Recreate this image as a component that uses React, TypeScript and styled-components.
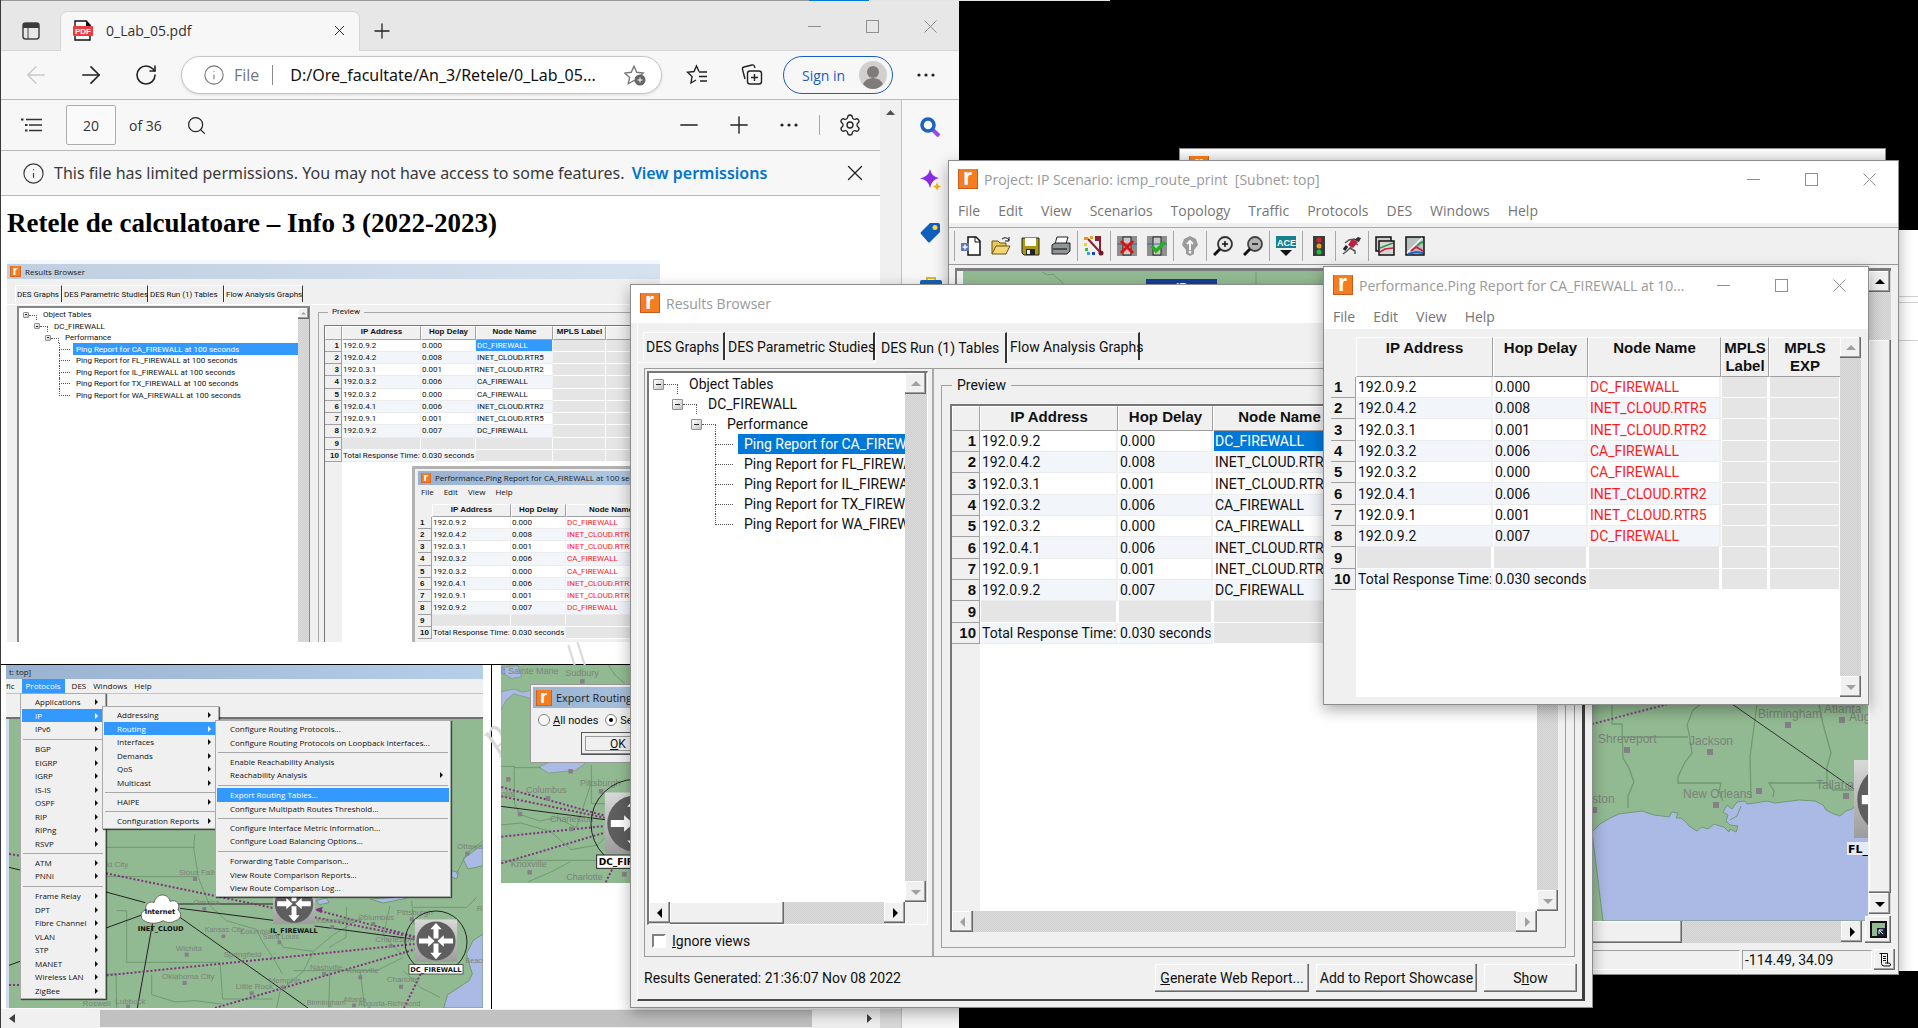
import React from "react";
import styled, { createGlobalStyle, css } from "styled-components";
import { ArrowLeft, ArrowRight, Info, Minus, Plus, RotateCw, Search, Settings, X } from "lucide-react";

const UI = 'Roboto, "Liberation Sans", Arial, sans-serif';
const UI_HEAD = '"Liberation Sans", Arial, sans-serif';
const SEGOE = '"Open Sans", "Segoe UI", sans-serif';
const NOTO = '"Noto Sans", "Segoe UI", sans-serif';
const UI_SIZE = 14;
const UI_BOLD = 15;
const MINI_SIZE = 8;

const GlobalStyle = createGlobalStyle`
  *, *::before, *::after { box-sizing: border-box; }
  body { margin: 0; background: #000; overflow: hidden; }
  button, input { font: inherit; color: inherit; margin: 0; padding: 0; border: 0; background: none; }
  a { text-decoration: none; }
  ul { list-style: none; margin: 0; padding: 0; }
  h1, p { margin: 0; }
  svg { display: block; }
`;

/* ------------------------------------------------------------------ */
/* Desktop and window frames                                           */
/* ------------------------------------------------------------------ */

const Desktop = styled.main`
  position: relative;
  height: 100vh;
  overflow: hidden;
  background: #000;
  font-family: ${UI};
  color: #111;
`;

type Box = { $x: number; $y: number; $w: number; $h: number };

const WindowFrame = styled.section<Box>`
  position: absolute;
  left: ${(p) => p.$x}px;
  top: ${(p) => p.$y}px;
  width: ${(p) => p.$w}px;
  height: ${(p) => p.$h}px;
  display: flex;
  flex-direction: column;
  border: 1px solid #8c8c8c;
  background: #f0f0f0;
  box-shadow: 0 5px 14px rgba(0, 0, 0, 0.32);
`;

const TitleBar = styled.header`
  display: flex;
  align-items: center;
  flex: none;
  height: 38px;
  padding: 0 0 2px 9px;
  background: #fff;
  font-family: ${SEGOE};
  font-size: 14px;
  color: #999;
`;

const TitleText = styled.span`
  flex: 1;
  padding-left: 6px;
  white-space: pre;
  overflow: hidden;
`;

const ControlButton = styled.button`
  display: grid;
  place-items: center;
  width: 58px;
  height: 100%;
  color: #8f8f8f;
`;

const MenuBar = styled.nav`
  display: flex;
  align-items: center;
  flex: none;
  height: 24px;
  background: #fff;
  font-family: ${SEGOE};
  font-size: 14px;
  color: #757575;
`;

const MenuButton = styled.button`
  padding: 0 9px;
  line-height: 20px;
`;

function RiverLogo({ size = 20 }: { size?: number }) {
  return (
    <svg width={size} height={size} viewBox="0 0 20 20" aria-hidden="true">
      <rect width="20" height="20" fill="#c85a1e" />
      <rect x="1" width="18" height="19" fill="#f57c1f" />
      <text x="5" y="16" fontFamily="Liberation Sans" fontWeight="700" fontSize="23" fill="#fff">r</text>
    </svg>
  );
}

function WindowControls() {
  return (
    <>
      <ControlButton aria-label="Minimize"><svg width="13" height="13"><path d="M0 6.5h13" stroke="currentColor" /></svg></ControlButton>
      <ControlButton aria-label="Maximize">
        <svg width="13" height="13"><rect x=".5" y=".5" width="12" height="12" fill="none" stroke="currentColor" /></svg>
      </ControlButton>
      <ControlButton aria-label="Close">
        <svg width="13" height="13"><path d="M.5.5l12 12M12.5.5l-12 12" fill="none" stroke="currentColor" /></svg>
      </ControlButton>
    </>
  );
}

/* ------------------------------------------------------------------ */
/* Classic bevelled parts                                              */
/* ------------------------------------------------------------------ */

const raised = css`
  background: #f0f0f0;
  box-shadow: inset -1px -1px 0 #696969, inset -2px -2px 0 #a0a0a0, inset 1px 1px 0 #fff;
`;

const BevelButton = styled.button`
  ${raised}
  height: 28px;
  font-size: ${UI_SIZE}px;
  white-space: nowrap;
`;

type Dir = "up" | "down" | "left" | "right";
const arrowPaths: Record<Dir, string> = {
  up: "M0 7l5-5 5 5z",
  down: "M0 3l5 5 5-5z",
  left: "M7 0L2 5l5 5z",
  right: "M3 0l5 5-5 5z",
};

const ScrollBox = styled.button<{ $s: number }>`
  ${raised}
  display: grid;
  place-items: center;
  flex: none;
  width: ${(p) => p.$s}px;
  height: ${(p) => p.$s}px;
`;

function ScrollArrow({ dir, size = 21, off = false }: { dir: Dir; size?: number; off?: boolean }) {
  const g = size > 15 ? 10 : 5;
  return (
    <ScrollBox $s={size} aria-label={`Scroll ${dir}`}>
      <svg width={g} height={g} viewBox="0 0 10 10">
        <path d={arrowPaths[dir]} fill={off ? "#a0a0a0" : "#000"} />
      </svg>
    </ScrollBox>
  );
}

const ScrollTrack = styled.div<{ $row?: boolean; $w?: number; $end?: number }>`
  display: flex;
  flex-direction: ${(p) => (p.$row ? "row" : "column")};
  flex: none;
  ${(p) => (p.$row ? `height: ${p.$w ?? 21}px; margin-right: ${p.$end ?? 0}px;` : `width: ${p.$w ?? 21}px; margin-bottom: ${p.$end ?? 0}px;`)}
  background: repeating-conic-gradient(#cfcfcf 0 25%, #dcdcdc 0 50%) 0 0 / 2px 2px;
`;

const Thumb = styled.div<{ $len?: number; $row?: boolean }>`
  ${raised}
  ${(p) => (p.$row ? `width: ${p.$len}px;` : "")}
`;

const Spacer = styled.div`
  flex: 1;
`;

/* ------------------------------------------------------------------ */
/* Report data                                                         */
/* ------------------------------------------------------------------ */

const hops: [string, string, string][] = [
  ["192.0.9.2", "0.000", "DC_FIREWALL"],
  ["192.0.4.2", "0.008", "INET_CLOUD.RTR5"],
  ["192.0.3.1", "0.001", "INET_CLOUD.RTR2"],
  ["192.0.3.2", "0.006", "CA_FIREWALL"],
  ["192.0.3.2", "0.000", "CA_FIREWALL"],
  ["192.0.4.1", "0.006", "INET_CLOUD.RTR2"],
  ["192.0.9.1", "0.001", "INET_CLOUD.RTR5"],
  ["192.0.9.2", "0.007", "DC_FIREWALL"],
  ["", "", ""],
  ["Total Response Time:", "0.030 seconds", ""],
];

const Report = styled.table<{ $mini?: boolean; $head: number; $endNums?: boolean; $red?: boolean }>`
  table-layout: fixed;
  border-collapse: separate;
  border-spacing: 0;
  flex: none;
  font-size: ${(p) => (p.$mini ? MINI_SIZE : UI_SIZE)}px;
  line-height: ${(p) => (p.$mini ? 10 : 18)}px;
  white-space: nowrap;

  th { font-family: ${UI_HEAD}; }
  thead th {
    height: ${(p) => p.$head}px;
    padding: ${(p) => (p.$mini ? 0 : 1)}px 0 0;
    vertical-align: top;
    white-space: pre-line;
    background: #f0f0f0;
    border: solid;
    border-width: 1px;
    border-color: #fff #a0a0a0 #a0a0a0 #fff;
    font-size: ${(p) => (p.$mini ? MINI_SIZE : UI_BOLD)}px;
  }
  tbody tr { height: ${(p) => (p.$mini ? 12 : 21)}px; }
  tbody tr:nth-child(${(p) => (p.$mini ? "4n" : "3n")}) { height: ${(p) => (p.$mini ? 13 : 22)}px; }
  tbody th {
    padding: 0 ${(p) => (p.$mini ? 2 : 3)}px;
    text-align: ${(p) => (p.$endNums ? "right" : "left")};
    background: #f0f0f0;
    border: solid;
    border-width: 0 1px 1px 0;
    border-color: #a0a0a0;
    font-size: ${(p) => (p.$mini ? MINI_SIZE : UI_BOLD)}px;
  }
  td {
    padding: 0 0 0 1px;
    overflow: hidden;
    background: #fff;
    border: solid;
    border-width: 0 ${(p) => (p.$mini ? 1 : 2)}px 1px ${(p) => (p.$mini ? 0 : 1)}px;
    border-color: #fff #f0f0f0 #ececec #fff;
  }
  tbody tr:nth-child(even) td { background: #f2f6fb; }
  tbody td:nth-child(4) { color: ${(p) => (p.$red ? "#ff1a1a" : "inherit")}; }
`;

const Cell = styled.td<{ $off?: boolean; $on?: boolean; $mini?: boolean }>`
  && { ${(p) => p.$off && "background: #e5e5e5 !important; border-color: #fff;"} }
  && { ${(p) => p.$on && `background: ${p.$mini ? "#3399ff" : "#0078d7"} !important; color: #fff !important;`} }
`;

type ReportProps = {
  widths: number[];
  heads: string[];
  head: number;
  corner?: boolean;
  mini?: boolean;
  red?: boolean;
  endNums?: boolean;
  selected?: boolean;
};

const CornerCell = styled.td`
  && { background: #f0f0f0; border: 0; }
`;

function ReportTable({ widths, heads, head, mini, red, endNums, selected, corner }: ReportProps) {
  const total = widths.reduce((a, b) => a + b, 0);
  return (
    <Report $mini={mini} $head={head} $red={red} $endNums={endNums} width={total}>
      <colgroup>{widths.map((w, i) => <col key={i} width={w} />)}</colgroup>
      <thead>
        <tr>
          {corner ? <th aria-label="Row" /> : <CornerCell />}
          {heads.map((h, i) => <th key={i} scope="col">{h}</th>)}
        </tr>
      </thead>
      <tbody>
        {hops.map((row, r) => (
          <tr key={r}>
            <th scope="row">{r + 1}</th>
            {heads.map((_, c) => (
              <Cell key={c} $mini={mini} $off={!row[c]} $on={selected && r === 0 && c === 2}>{row[c]}</Cell>
            ))}
          </tr>
        ))}
      </tbody>
    </Report>
  );
}

/* ------------------------------------------------------------------ */
/* Object tree                                                         */
/* ------------------------------------------------------------------ */

type TreeSize = { row: number; step: number; box: number; elbow: number; leaf: number; dash: number; gap: number; pad: number; font: number };
const bigTree: TreeSize = { row: 20, step: 19, box: 11, elbow: 14, leaf: 62, dash: 18, gap: 5, pad: 6, font: UI_SIZE };
const miniTree: TreeSize = { row: 11, step: 11, box: 6, elbow: 8, leaf: 36, dash: 11, gap: 3, pad: 3, font: MINI_SIZE };

const TreeRow = styled.li<{ $t: TreeSize; $indent: number }>`
  display: flex;
  align-items: center;
  height: ${(p) => p.$t.row}px;
  padding-left: ${(p) => p.$indent}px;
  font-size: ${(p) => p.$t.font}px;
  white-space: nowrap;
  ${(p) => p.$t.row < 15 && "&:nth-child(even) { height: 12px; }"}
`;

const Expander = styled.button<{ $s: number }>`
  display: grid;
  place-items: center;
  flex: none;
  width: ${(p) => p.$s}px;
  height: ${(p) => p.$s}px;
  border: 1px solid #909090;
  border-radius: 1px;
  background: linear-gradient(135deg, #fff, #c4c4c4);
  &::before { content: ""; width: 60%; height: 1px; background: #222; }
`;

const Elbow = styled.span<{ $w: number }>`
  flex: none;
  align-self: flex-end;
  width: ${(p) => p.$w}px;
  height: 50%;
  border: 1px dotted #555;
  border-width: 1px 1px 0 0;
`;

const Tee = styled.span<{ $w: number; $last: boolean }>`
  display: flex;
  flex-direction: column;
  flex: none;
  align-self: stretch;
  width: ${(p) => p.$w}px;
  &::before, &::after { content: ""; flex: 1; border: 0 dotted #555; border-left-width: 1px; }
  &::before { border-bottom-width: 1px; }
  &::after { border-left-width: ${(p) => (p.$last ? 0 : 1)}px; }
`;

const TreeLabel = styled.span<{ $t: TreeSize; $on?: boolean }>`
  display: flex;
  align-items: center;
  flex: ${(p) => (p.$on ? 1 : "none")};
  height: 100%;
  margin-left: ${(p) => p.$t.gap}px;
  padding-left: ${(p) => p.$t.pad}px;
  ${(p) => p.$on && `background: ${p.$t.row < 15 ? "#3399ff" : "#0078d7"}; color: #fff;`}
`;

const TreeList = styled.ul`
  flex: 1;
  min-width: 0;
  overflow: hidden;
  padding: 1px 0 0 4px;
  background: #fff;
`;

const sites = ["CA", "FL", "IL", "TX", "WA"];

function ObjectTree({ t }: { t: TreeSize }) {
  return (
    <TreeList>
      {["Object Tables", "DC_FIREWALL", "Performance"].map((label, depth) => (
        <TreeRow key={label} $t={t} $indent={depth * t.step}>
          <Expander $s={t.box} aria-label={`Collapse ${label}`} />
          <Elbow $w={t.elbow} />
          <TreeLabel $t={t}>{label}</TreeLabel>
        </TreeRow>
      ))}
      {sites.map((s, i) => (
        <TreeRow key={s} $t={t} $indent={t.leaf}>
          <Tee $w={t.dash} $last={i === sites.length - 1} />
          <TreeLabel $t={t} $on={i === 0}>{`Ping Report for ${s}_FIREWALL at 100 seconds`}</TreeLabel>
        </TreeRow>
      ))}
    </TreeList>
  );
}

/* ------------------------------------------------------------------ */
/* Map drawing                                                         */
/* ------------------------------------------------------------------ */

const LAND = "#92ba92";
const SEA = "#abb9e5";
const BORDER = "#6f9a72";

function City({ x, y, label, sx, sy, size }: { x: number; y: number; label?: string; sx?: number; sy?: number; size: number }) {
  const s = size * 0.5;
  return (
    <>
      {sx !== undefined && sy !== undefined && <rect x={sx - s / 2} y={sy - s / 2} width={s} height={s} fill="#857f88" />}
      {label && <text x={x} y={y} fontFamily="Liberation Sans" fontSize={size} fill="#7a827a">{label}</text>}
    </>
  );
}

function Router({ x, y, s }: { x: number; y: number; s: number }) {
  const arrow = "M-7 20V-6H-16L0-24L16-6H7V20z";
  return (
    <svg x={x} y={y} width={s} height={s} viewBox="0 0 120 120">
      <defs>
        <linearGradient id="plate" x1="0" y1="0" x2="0" y2="1">
          <stop offset="0" stopColor="#d9d9d9" /><stop offset="1" stopColor="#9c9c9c" />
        </linearGradient>
      </defs>
      <rect width="120" height="120" fill="url(#plate)" />
      <circle cx="60" cy="61" r="55" fill="#5e5e5e" />
      <g fill="#fff">
        <path d={arrow} transform="translate(60 34)" />
        <path d={arrow} transform="translate(60 88) rotate(180)" />
        <path d={arrow} transform="translate(32 61) rotate(90)" />
        <path d={arrow} transform="translate(88 61) rotate(-90)" />
      </g>
    </svg>
  );
}

function ProjectMap() {
  return (
    <svg width="905" height="650" viewBox="964 271 905 650" role="img" aria-label="Network map">
      <rect x="964" y="271" width="905" height="650" fill={LAND} />
      <path d="M1043 272l6 3 5-1 5 5 3 2 3 4M1257 272v14" fill="none" stroke={BORDER} />
      <rect x="1147" y="279" width="71" height="10" fill="#173e94" />
      <text x="1177" y="292" fontFamily="Liberation Sans" fontWeight="700" fontSize="12" fill="#fff">IP</text>
      <path
        d="M1593 832l8-8 10-6 9-4 7-1 16-2 12 4 8 1 7 1 3-5 6 1-2 5 5 0 6 5 2 3 8 5 5-4 6 2 6-5 6 2 4 1 5 5 1-3 6 3 2-6-8-1-4-4 2-6-5-3 4-7 5 4 5-7 8-1 2 3 8-1 12-2 8 2 24-3 16 1 8 4 3 5 8 4 6 2 6-5 6-2 6-5h21v117h-276z"
        fill={SEA} stroke={BORDER}
      />
      <path
        d="M1613 704v20h10l1 34 6 10 5 14-6 14v12M1624 737h65M1702 704l-8 6-6 15 2 8 3 20-7 9-7 15v6h43l-2 8 4 10M1758 704l-7 53 1 41M1820 704l4 20 8 29-4 14v16h-58l5 8-1 6M1828 783l6 7h21"
        fill="none" stroke={BORDER} strokeWidth="1.3"
      />
      <path d="M1742 806l-4 10-7 4" fill="none" stroke={BORDER} />
      <path d="M1593 724l76-20" stroke="#80407f" strokeWidth="2" strokeDasharray="2 2" />
      <path d="M1733 704l122 85" stroke="#333" />
      <City x={1599} y={743} label="Shreveport" sx={1628} sy={750} size={12} />
      <City x={1690} y={745} label="Jackson" sx={1711} sy={752} size={12} />
      <City x={1684} y={798} label="New Orleans" sx={1717} sy={805} size={12} />
      <City x={0} y={0} sx={1760} sy={791} size={12} />
      <City x={1759} y={718} label="Birmingham" sx={1789} sy={725} size={12} />
      <City x={1825} y={713} label="Atlanta" sx={1843} sy={720} size={12} />
      <City x={1850} y={721} label="Aug" size={12} />
      <City x={1817} y={789} label="Tallaha" sx={1847} sy={796} size={12} />
      <City x={1593} y={803} label="ston" sx={1595} sy={810} size={12} />
      <Router x={1855} y={760} s={78} />
      <rect x="1848" y="842" width="40" height="13" fill="#e6eaf6" />
      <text x="1849" y="853" fontFamily="DejaVu Sans" fontWeight="700" fontSize="11">FL_</text>
    </svg>
  );
}

function MenuShotMap() {
  return (
    <svg width="474" height="289" viewBox="27 195 1422 867" role="img" aria-label="Network map">
      <rect x="27" y="195" width="1422" height="867" fill={LAND} />
      <path d="M1449 840l-30 20-20 40 18 60-10 20-30 20-34 22-12 40h118zM1449 570l-60 45 15 30 45-10zM948 740l30-8 10 14-30 6zM1355 650l20 5-4 20-18-6zM1110 735l60-4 50-10v12l-70 14z" fill={SEA} stroke={BORDER} strokeWidth="3" />
      <path
        d="M320 580h265M585 540l-4 40 14 90 24 60 10 24 50 46 90 26 20 40 20 30 24 38 14 26M320 668h270M350 770h30v155M380 925h280M320 960h28l2 102M455 962v60l70 22 60-4 80 10M660 925l8 110h150M820 830l30 50 90 12 60-50 100-60M940 892l-30 60-70 60-10 50M880 950h250l80-40M990 950l-4 110M1080 950l14 110M1210 950l50 50 60 30M1040 760l-2 90-50 30M1235 740l6 70 60 30M1170 755l-20 90 60 60M1240 760h160l30-30M1449 560l-50 40-30 60"
        fill="none" stroke={BORDER} strokeWidth="3"
      />
      <g stroke="#222" strokeWidth="3" fill="none">
        <path d="M318 714l118 32M318 822l110-40M526 750h296M540 763l280 36M944 816l300 40M540 790l384 272M458 806l-46 256M27 640l33 8M27 934l33-12" />
      </g>
      <g stroke="#80307f" strokeWidth="6" strokeDasharray="6 6" fill="none">
        <path d="M318 658l502 104M320 964l924-94M645 1062l600-176M950 768l294 80M944 790l300 60M27 600l33 5M27 993h33M1262 960l-50 102" />
      </g>
      <path d="M946 766l22-8-4 20z" fill="#80307f" />
      <City x={318} y={640} label="id City" size={24} />
      <City x={536} y={664} label="Sioux Falls" sx={585} sy={675} size={24} />
      <City x={580} y={752} label="Omaha" sx={613} sy={765} size={24} />
      <City x={614} y={834} label="Kansas City" sx={670} sy={847} size={22} />
      <City x={720} y={839} label="Columbia" size={22} />
      <City x={788} y={855} label="Saint Louis" sx={838} sy={865} size={22} />
      <City x={527} y={890} label="Wichita" sx={560} sy={902} size={24} />
      <City x={671} y={909} label="Springfield" size={24} />
      <City x={486} y={976} label="Oklahoma City" sx={554} sy={987} size={24} />
      <City x={707} y={1004} label="Little Rock" sx={755} sy={1018} size={24} />
      <City x={806} y={988} label="Memphis" sx={848} sy={1000} size={24} />
      <City x={930} y={948} label="Nashville" sx={972} sy={960} size={24} />
      <City x={1040} y={958} label="Knoxville" sx={1081} sy={970} size={24} />
      <City x={1160} y={985} label="Charlotte" sx={1203} sy={998} size={24} />
      <City x={1030} y={1043} label="Atlanta" sx={1062} sy={1054} size={22} />
      <City x={1074} y={1056} label="Augusta-Richmond" size={22} />
      <City x={920} y={1052} label="Birmingham" size={22} />
      <City x={248} y={1056} label="Roswell" size={24} />
      <City x={346} y={1050} label="Lubbock" sx={384} sy={1058} size={24} />
      <City x={948} y={807} label="Indianapolis" sx={997} sy={819} size={22} />
      <City x={1074} y={798} label="Columbus" sx={1120} sy={810} size={24} />
      <City x={1126} y={863} label="Charleston" sx={1172} sy={876} size={24} />
      <City x={1190} y={783} label="Pittsburgh" sx={1235} sy={796} size={24} />
      <City x={1371} y={586} label="Ottawa" sx={1402} sy={599} size={24} />
      <City x={1396} y={926} label="Beach" size={22} />
      <City x={1430} y={770} label="Ro" size={24} />
      <circle cx="1308" cy="864" r="93" fill="none" stroke="#222" strokeWidth="3" />
      <Router x={819} y={685} s={126} />
      <Router x={1244} y={796} s={128} />
      <path d="M436 802c-18-6-16-32 2-34-6-20 16-28 24-22 8-32 44-28 48-4 20-8 32 10 24 26 14 10 8 30-8 32-10 8-28 6-36 0-18 10-40 10-54 2z" fill="#fff" stroke="#666" strokeWidth="3" />
      <g fontFamily="DejaVu Sans" fontWeight="700" fill="#111">
        <text x="434" y="780" fontSize="20">Internet</text>
        <text x="413" y="832" fontSize="20">INET_CLOUD</text>
        <text x="811" y="838" fontSize="20">IL_FIREWALL</text>
        <rect x="1227" y="932" width="162" height="28" fill="#fff" stroke="#222" strokeWidth="2" />
        <text x="1231" y="953" fontSize="20">DC_FIREWALL</text>
      </g>
    </svg>
  );
}

function DialogShotMap() {
  return (
    <svg width="129" height="218" viewBox="63 30 387 654" role="img" aria-label="Network map">
      <rect x="63" y="30" width="387" height="654" fill={LAND} />
      <path d="M63 38l50-6 12 34-30 4-32-16zM63 110l40-8 24 10 25-6v24l-30-8-20-6-24 20-15 30zM176 336l40-18h110l-40 28-80 8z" fill={SEA} stroke={BORDER} strokeWidth="2" />
      <path d="M385 30l20 30 28 24M63 334h40v110l16 34 60 20 50-10 60 30 30-90 14-44M103 338h80M334 330v116h116M63 510l60-6 90 26 60 54 80-14 60-60M63 616h387M145 680l70-30 56-30" fill="none" stroke={BORDER} strokeWidth="3" />
      <path d="M63 454l312 40" stroke="#222" strokeWidth="3" />
      <g stroke="#80307f" strokeWidth="6" strokeDasharray="6 6">
        <path d="M64 396l310 86M64 424l310 64M64 545l310-32M64 625l310-92M396 644l-20 40" />
      </g>
      <City x={63} y={56} label="lt Sainte Marie" size={27} />
      <City x={256} y={62} label="Sudbury" sx={307} sy={79} size={27} />
      <City x={0} y={0} sx={85} sy={373} size={27} />
      <City x={0} y={0} sx={272} sy={349} size={27} />
      <City x={138} y={413} label="Columbus" sx={204} sy={430} size={27} />
      <City x={300} y={392} label="Pittsburgh" sx={363} sy={409} size={27} />
      <City x={63} y={425} label="olis" sx={120} sy={477} size={27} />
      <City x={210} y={502} label="Charleston" sx={274} sy={522} size={27} />
      <City x={92} y={636} label="Knoxville" sx={149} sy={652} size={27} />
      <City x={259} y={674} label="Charlotte" sx={433} sy={658} size={27} />
      <circle cx="466" cy="506" r="133" fill="none" stroke="#222" strokeWidth="3" />
      <Router x={374} y={412} s={184} />
      <rect x="350" y="600" width="180" height="40" fill="#fff" stroke="#222" strokeWidth="3" />
      <text x="356" y="630" fontFamily="DejaVu Sans" fontWeight="700" fontSize="27">DC_FIREWALL</text>
    </svg>
  );
}

/* ------------------------------------------------------------------ */
/* PDF browser window                                                  */
/* ------------------------------------------------------------------ */

const Browser = styled.section`
  position: absolute;
  left: 0;
  top: 0;
  bottom: 0;
  width: 959px;
  display: flex;
  flex-direction: column;
  border-left: 1px solid #3a3a3a;
  background: #f7f7f7;
  font-family: ${SEGOE};
  font-size: 14px;
  color: #333;
`;

const TabStrip = styled.div`
  display: flex;
  align-items: flex-end;
  flex: none;
  height: 51px;
  border-top: 1px solid #9a9a9a;
  background: linear-gradient(#d6d6d6, #d6d6d6) bottom / 100% 1px no-repeat #e7e7e7;
`;

const IconCell = styled.button<{ $w: number; $h?: number; $c?: string }>`
  display: grid;
  place-items: center;
  flex: none;
  width: ${(p) => p.$w}px;
  height: ${(p) => p.$h ?? 48}px;
  color: ${(p) => p.$c ?? "#222"};
`;

const Tab = styled.div`
  display: flex;
  align-items: center;
  width: 300px;
  height: 40px;
  padding: 0 10px 2px 12px;
  border: 1px solid #d6d6d6;
  border-bottom: 0;
  border-radius: 7px 7px 0 0;
  background: #f7f7f7;
`;

const TabTitle = styled.span`
  flex: 1;
  padding-left: 13px;
`;

const NavRow = styled.div`
  display: flex;
  align-items: center;
  flex: none;
  height: 49px;
  padding-left: 7px;
  border-bottom: 1px solid #b9b9b9;
`;

const AddressBar = styled.div`
  display: flex;
  align-items: center;
  flex: 1;
  height: 38px;
  margin: 0 7px 0 8px;
  padding: 0 15px 0 21px;
  border: 1px solid #c6c6c6;
  border-radius: 19px;
  background: #fff;
  box-shadow: 0 1px 3px rgba(0, 0, 0, 0.12);
  font-size: 16px;
  color: #767676;
`;

const Scheme = styled.span`
  margin: 0 13px 0 9px;
  padding-right: 13px;
  border-right: 1px solid #8a8a8a;
  line-height: 20px;
`;

const Address = styled.input`
  flex: 1;
  min-width: 0;
  height: 30px;
  padding-left: 4px;
  font-family: ${NOTO};
  font-size: 16px;
  color: #111;
`;

const SignIn = styled.button`
  display: flex;
  align-items: center;
  justify-content: space-between;
  flex: none;
  width: 110px;
  height: 38px;
  margin-left: 4px;
  padding: 0 5px 0 18px;
  border: 1px solid #1b5cbe;
  border-radius: 19px;
  font-size: 14px;
  color: #1b5cbe;
`;

const Below = styled.div`
  display: flex;
  flex: 1;
  min-height: 0;
`;

const PdfPane = styled.div`
  display: grid;
  grid-template: minmax(0, 1fr) 19px / minmax(0, 1fr) 22px;
  flex: 1;
  min-width: 0;
`;

const PdfMain = styled.div`
  display: flex;
  flex-direction: column;
  overflow: hidden;
`;

const VBar = styled.div`
  padding: 9px 0 0 6px;
  border-right: 1px solid #c0c0c0;
  background: #f0f0f0;
`;

const HBar = styled.div`
  display: flex;
  align-items: center;
  padding-left: 8px;
  background: #f0f0f0;
`;

const HThumb = styled.div`
  width: 712px;
  height: 17px;
  margin: 0 auto 0 85px;
  background: #c1c1c1;
`;

const BarCorner = styled.div`
  border-right: 1px solid #c0c0c0;
  background: #dadada;
`;

const PdfTools = styled.div`
  display: flex;
  align-items: center;
  flex: none;
  height: 51px;
  padding-right: 5px;
  border-bottom: 1px solid #b9b9b9;
`;

const PageInput = styled.input`
  width: 50px;
  height: 40px;
  margin: 0 13px 0 3px;
  border: 1px solid #adadad;
  border-radius: 2px;
  background: #fafafa;
  text-align: center;
`;

const ToolDivider = styled.span`
  width: 1px;
  height: 20px;
  margin: 0 5px;
  background: #a8a8a8;
`;

const Notice = styled.p`
  display: flex;
  align-items: center;
  flex: none;
  height: 45px;
  padding-left: 21px;
  border-bottom: 1px solid #b9b9b9;
  font-family: ${NOTO};
  font-size: 16px;
  color: #3a3a3a;
  white-space: nowrap;
`;

const NoticeText = styled.span`
  flex: 1;
  padding-left: 9px;
`;

const NoticeLink = styled.a`
  padding-left: 3px;
  font-weight: 600;
  color: #0074cc;
`;

const SideBar = styled.aside`
  display: flex;
  flex-direction: column;
  flex: none;
  width: 57px;
`;

const Dots = () => (
  <svg width="18" height="4"><g fill="currentColor"><circle cx="2" cy="2" r="1.6" /><circle cx="9" cy="2" r="1.6" /><circle cx="16" cy="2" r="1.6" /></g></svg>
);

const starPath = "M8 1l2.2 4.8 5.2.6-3.9 3.5 1.1 5.1L8 12.4 3.4 15l1.1-5.1L.6 6.4l5.2-.6z";

/* Document page */

const Page = styled.article`
  position: relative;
  display: flex;
  flex-direction: column;
  flex: 1;
  min-height: 0;
  overflow: hidden;
  background: #fff;
`;

const PageHeading = styled.h1`
  flex: none;
  height: 64px;
  padding: 11px 0 0 6px;
  font: 700 27px/32px "Liberation Serif", "Times New Roman", serif;
  color: #000;
  white-space: nowrap;
`;

const Figure = styled.div`
  position: relative;
  display: flex;
  flex-direction: column;
  flex: none;
  width: 653px;
  height: 382px;
  margin: 0 0 22px 6px;
  padding-top: 4px;
  overflow: hidden;
  background: linear-gradient(#f4f8fd 4px, #f0f0f0 4px);
  font-family: ${UI};
  font-size: ${MINI_SIZE}px;
  color: #111;
`;

const MiniTitle = styled.div<{ $h: number; $blue?: boolean; $font?: number }>`
  display: flex;
  align-items: center;
  flex: none;
  gap: 4px;
  height: ${(p) => p.$h}px;
  padding-left: 3px;
  background: ${(p) => (p.$blue ? "linear-gradient(90deg, #98b2d0, #b6cfe9)" : "linear-gradient(90deg, #bfcfdf, #d5e2f0)")};
  font-family: ${SEGOE};
  font-size: ${(p) => p.$font ?? 8}px;
  line-height: 14px;
  color: #222;
  white-space: nowrap;
`;

const TabRow = styled.div<{ $mini?: boolean }>`
  display: flex;
  align-items: flex-end;
  flex: none;
  height: ${(p) => (p.$mini ? 26 : 40)}px;
  padding-left: ${(p) => (p.$mini ? 8 : 5)}px;
  border-bottom: 1px solid #fff;
`;

const ReportTab = styled.button<{ $mini?: boolean; $on?: boolean; $w: number }>`
  width: ${(p) => p.$w}px;
  height: ${(p) => (p.$mini ? 17 : p.$on ? 31 : 28)}px;
  margin-bottom: ${(p) => (p.$mini ? 2 : p.$on ? -1 : 2)}px;
  padding-left: ${(p) => (p.$mini ? 1 : p.$on ? 5 : 2)}px;
  border: solid;
  border-width: 1px ${(p) => (p.$mini ? 1 : 2)}px 0 1px;
  border-color: #fff #333 #333 #fff;
  background: #f0f0f0;
  font-size: ${(p) => (p.$mini ? MINI_SIZE : UI_SIZE)}px;
  text-align: left;
  white-space: nowrap;
`;

const tabNames = ["DES Graphs", "DES Parametric Studies", "DES Run (1) Tables", "Flow Analysis Graphs"];

function ReportTabs({ widths, mini }: { widths: number[]; mini?: boolean }) {
  return (
    <TabRow $mini={mini} role="tablist">
      {tabNames.map((n, i) => (
        <ReportTab key={n} role="tab" aria-selected={i === 2} $mini={mini} $on={i === 2} $w={widths[i]}>{n}</ReportTab>
      ))}
    </TabRow>
  );
}

const MiniBody = styled.div`
  display: flex;
  flex: 1;
  min-height: 0;
  padding: 1px 0 0 10px;
`;

const MiniTreeBox = styled.div`
  display: flex;
  flex: none;
  width: 293px;
  border: solid #888;
  border-width: 2px 1px 0 2px;
`;

const MiniPreview = styled.fieldset`
  flex: 1;
  min-width: 0;
  margin: 0 0 0 8px;
  padding: 7px 0 0 5px;
  border: solid #a8a8a8;
  border-width: 1px 0 0 1px;
`;

const MiniLegend = styled.legend`
  margin-left: 4px;
  padding: 0 4px;
  line-height: 12px;
`;

const MiniSheet = styled.div<{ $gutter: number }>`
  height: 100%;
  border-left: 1px solid #777;
  border-top: 1px solid #777;
  background: linear-gradient(90deg, #f0f0f0 ${(p) => p.$gutter}px, #fff ${(p) => p.$gutter}px);
`;

const MiniWindow = styled.div`
  position: absolute;
  left: 405px;
  top: 206px;
  width: 300px;
  height: 200px;
  display: flex;
  flex-direction: column;
  padding: 2px 0 0 3px;
  border: 3px solid #b2b2b2;
  background: #f0f0f0;
`;

const MiniMenu = styled.div<{ $pad: number; $gap: number; $after?: number }>`
  display: flex;
  align-items: center;
  flex: none;
  gap: ${(p) => p.$gap}px;
  height: 14px;
  margin-bottom: ${(p) => p.$after ?? 0}px;
  padding-left: ${(p) => p.$pad}px;
  font-family: ${SEGOE};
  font-size: 8px;
  line-height: 12px;
`;

const Columns = styled.div`
  display: flex;
  flex: 1;
  min-height: 0;
  border-top: 1px solid #000;
`;

const LeftColumn = styled.div`
  flex: none;
  width: 491px;
  padding-left: 5px;
  border-right: 1px solid #000;
`;

const RightColumn = styled.div`
  flex: 1;
  padding-left: 9px;
`;

const MenuShot = styled.div`
  position: relative;
  width: 477px;
  background: #f0f0f0;
  font-family: ${SEGOE};
  font-size: 8px;
  line-height: 12px;
  color: #111;
`;

const MenuTop = styled.span<{ $on?: boolean }>`
  padding: ${(p) => (p.$on ? "1px 4px" : "1px 0")};
  ${(p) => p.$on && "background: #3399ff; color: #fff;"}
`;

const ShotToolbar = styled.div`
  height: 26px;
  border-top: 1px solid #c4c4c4;
  border-bottom: 2px solid #707070;
`;

const ShotMap = styled.div`
  padding-left: 3px;
  background: #d3deea;
`;

const Popup = styled.ul<{ $x: number; $y: number; $w: number; $indent: number }>`
  position: absolute;
  left: ${(p) => p.$x}px;
  top: ${(p) => p.$y}px;
  width: ${(p) => p.$w}px;
  padding: 1px;
  border: 1px solid #aaa;
  background: #f0f0f0;
  box-shadow: 1px 1px 1px rgba(0, 0, 0, 0.6);
  li { padding-left: ${(p) => p.$indent}px; }
`;

const PopupItem = styled.li<{ $on?: boolean; $sep?: boolean }>`
  display: flex;
  align-items: center;
  justify-content: space-between;
  height: 13px;
  padding-right: 5px;
  white-space: nowrap;
  &:nth-child(odd) { height: 14px; }
  ${(p) => p.$on && "background: #3399ff; color: #fff;"}
  ${(p) => p.$sep && "&&& { height: 1px; margin: 3px 1px 2px; background: #a8a8a8; }"}
`;

const SUB = "›";

function PopupMenu({ x, y, w, indent, items, active }: { x: number; y: number; w: number; indent: number; items: string[]; active: string }) {
  return (
    <Popup $x={x} $y={y} $w={w} $indent={indent}>
      {items.map((raw, i) => {
        if (raw === "-") return <PopupItem key={i} $sep />;
        const sub = raw.endsWith(SUB);
        const label = sub ? raw.slice(0, -1) : raw;
        return (
          <PopupItem key={i} $on={label === active}>
            {label}
            {sub && <svg width="4" height="6"><path d="M0 0l3 3-3 3z" fill="currentColor" /></svg>}
          </PopupItem>
        );
      })}
    </Popup>
  );
}

const protocolItems = ["Applications›", "IP›", "IPv6›", "-", "BGP›", "EIGRP›", "IGRP›", "IS-IS›", "OSPF›", "RIP›", "RIPng›", "RSVP›", "-", "ATM›", "PNNI›", "-", "Frame Relay›", "DPT›", "Fibre Channel›", "VLAN›", "STP›", "MANET›", "Wireless LAN›", "ZigBee›"];
const ipItems = ["Addressing›", "Routing›", "Interfaces›", "Demands›", "QoS›", "Multicast›", "-", "HAIPE›", "-", "Configuration Reports›"];
const routingItems = ["Configure Routing Protocols...", "Configure Routing Protocols on Loopback Interfaces...", "-", "Enable Reachability Analysis", "Reachability Analysis›", "-", "Export Routing Tables...", "Configure Multipath Routes Threshold...", "-", "Configure Interface Metric Information...", "Configure Load Balancing Options...", "-", "Forwarding Table Comparison...", "View Route Comparison Reports...", "View Route Comparison Log..."];

const DialogShot = styled.div`
  position: relative;
  width: 129px;
  overflow: hidden;
`;

const ExportDialog = styled.div`
  position: absolute;
  left: 29px;
  top: 19px;
  width: 220px;
  height: 79px;
  display: flex;
  flex-direction: column;
  padding: 2px;
  border: 1px solid #999;
  background: #f0f0f0;
  font-family: ${SEGOE};
  font-size: 11px;
  color: #111;
`;

const RadioRow = styled.div`
  display: flex;
  align-items: center;
  gap: 7px;
  height: 24px;
  padding-left: 5px;
`;

const RadioLabel = styled.label`
  display: flex;
  align-items: center;
  gap: 3px;
  font-family: ${UI};
  font-size: 11px;
  white-space: nowrap;
`;

const Radio = styled.input`
  appearance: none;
  display: grid;
  place-items: center;
  width: 12px;
  height: 12px;
  border: 1px solid #808080;
  border-radius: 6px;
  background: #fff;
  &:checked::before { content: ""; width: 4px; height: 4px; border-radius: 2px; background: #000; }
`;

const OkButton = styled.button`
  width: 74px;
  height: 23px;
  margin-left: 48px;
  border: 1px solid #555;
  box-shadow: inset -1px -1px 0 #888, inset 0 0 0 3px #f0f0f0, inset 0 0 0 4px #999;
  font-family: ${UI};
  font-size: 12px;
`;

const Watermark = styled.span<{ $x: number; $y: number }>`
  position: absolute;
  left: ${(p) => p.$x}px;
  top: ${(p) => p.$y}px;
  transform: rotate(-45deg);
  font: italic 40px/40px "Liberation Serif", serif;
  color: #d8d8d8;
`;

function ResultsFigure() {
  return (
    <Figure>
      <MiniTitle $h={15}><RiverLogo size={11} />Results Browser</MiniTitle>
      <ReportTabs mini widths={[47, 86, 76, 79]} />
      <MiniBody>
        <MiniTreeBox>
          <ObjectTree t={miniTree} />
          <ScrollTrack $w={11}><ScrollArrow dir="up" size={11} off /></ScrollTrack>
        </MiniTreeBox>
        <MiniPreview>
          <MiniLegend>Preview</MiniLegend>
          <MiniSheet $gutter={17}>
            <ReportTable mini corner endNums selected head={14} widths={[17, 79, 55, 77, 53, 80]} heads={["IP Address", "Hop Delay", "Node Name", "MPLS Label", ""]} />
          </MiniSheet>
        </MiniPreview>
      </MiniBody>
      <MiniWindow>
        <MiniTitle $h={14} $blue><RiverLogo size={10} />Performance.Ping Report for CA_FIREWALL at 100 seconds</MiniTitle>
        <MiniMenu $pad={3} $gap={10} $after={5}><span>File</span><span>Edit</span><span>View</span><span>Help</span></MiniMenu>
        <ReportTable mini red head={13} widths={[14, 79, 55, 90]} heads={["IP Address", "Hop Delay", "Node Name"]} />
      </MiniWindow>
    </Figure>
  );
}

function BrowserWindow() {
  return (
    <Browser aria-label="0_Lab_05.pdf">
      <TabStrip>
        <IconCell $w={59} $h={40} aria-label="Tab actions">
          <svg width="18" height="18"><rect x="1" y="1" width="16" height="16" rx="2.5" fill="none" stroke="#444" strokeWidth="1.5" /><path d="M1 1h16v5H1z" fill="#3b3b3b" /><path d="M6 6v11" stroke="#444" /></svg>
        </IconCell>
        <Tab>
          <svg width="20" height="21" viewBox="0 0 20 21">
            <path d="M2 1h11l4 4v15H2z" fill="#fff" stroke="#111" strokeWidth="1.4" />
            <path d="M13 0v6h5" fill="#111" />
            <rect y="6" width="20" height="10" rx="1" fill="#e93d42" />
            <text x="2" y="14" fontFamily="Liberation Sans" fontWeight="700" fontSize="8" fill="#fff">PDF</text>
          </svg>
          <TabTitle>0_Lab_05.pdf</TabTitle>
          <IconCell $w={20} $h={24} aria-label="Close tab"><X size={17} strokeWidth={1.4} /></IconCell>
        </Tab>
        <IconCell $w={44} $h={40} aria-label="New tab"><Plus size={24} strokeWidth={1.3} /></IconCell>
        <Spacer />
        <WindowControls />
      </TabStrip>
      <NavRow>
        <IconCell $w={55} $c="#c9c9c9" aria-label="Back"><ArrowLeft size={28} strokeWidth={1.2} /></IconCell>
        <IconCell $w={55} aria-label="Forward"><ArrowRight size={28} strokeWidth={1.4} /></IconCell>
        <IconCell $w={55} aria-label="Refresh"><RotateCw size={24} strokeWidth={1.6} /></IconCell>
        <AddressBar>
          <Info size={22} strokeWidth={1.2} />
          <Scheme>File</Scheme>
          <Address aria-label="Address" defaultValue="D:/Ore_facultate/An_3/Retele/0_Lab_05..." />
          <svg width="22" height="22" viewBox="0 0 22 22">
            <path d={starPath} transform="translate(0 1) scale(1.25)" fill="none" stroke="#777" strokeWidth="1.1" />
            <circle cx="16" cy="16" r="5.5" fill="#666" /><path d="M16 13.5v5M13.5 16h5" stroke="#fff" />
          </svg>
        </AddressBar>
        <IconCell $w={55} aria-label="Favorites">
          <svg width="22" height="22" viewBox="0 0 22 22"><path d="M13 7.5L10.5 2 8 7.5l-6.5.8L6 12.5 5 19l5-3" fill="none" stroke="#222" strokeWidth="1.4" /><path d="M13 8h8M13 12.5h8M14 17h7" stroke="#222" strokeWidth="1.4" /></svg>
        </IconCell>
        <IconCell $w={55} aria-label="Collections">
          <svg width="22" height="22" viewBox="0 0 22 22" fill="none" stroke="#222" strokeWidth="1.4"><rect x="6.5" y="7" width="14" height="13" rx="2.5" /><path d="M13.5 10v7M10 13.5h7M4 15L1.5 5.5Q1 3.5 3 3l8-2q2-.5 2.5 1.5L14 4" /></svg>
        </IconCell>
        <SignIn>
          Sign in
          <svg width="28" height="28"><circle cx="14" cy="14" r="14" fill="#d2d0ce" /><circle cx="14" cy="11" r="6" fill="#7f7b78" /><path d="M4 23q3-6 10-6t10 6q-4 5-10 5t-10-5z" fill="#7f7b78" /></svg>
        </SignIn>
        <IconCell $w={66} aria-label="Settings and more"><Dots /></IconCell>
      </NavRow>
      <Below>
        <PdfPane>
          <PdfMain>
            <PdfTools>
              <IconCell $w={62} aria-label="Contents">
                <svg width="22" height="14" viewBox="0 0 22 14"><path d="M5 1.5h16M8 7h13M8 12.5h13" stroke="#333" strokeWidth="1.5" /><path d="M0 1.5h2.5M4 7h2.5M4 12.5h2.5" stroke="#333" strokeWidth="2" /></svg>
              </IconCell>
              <PageInput aria-label="Page number" defaultValue="20" />
              of 36
              <IconCell $w={70} aria-label="Find"><Search size={21} strokeWidth={1.4} /></IconCell>
              <Spacer />
              <IconCell $w={50} aria-label="Zoom out"><Minus size={28} strokeWidth={1.2} /></IconCell>
              <IconCell $w={50} aria-label="Zoom in"><Plus size={28} strokeWidth={1.2} /></IconCell>
              <IconCell $w={50} aria-label="More options"><Dots /></IconCell>
              <ToolDivider />
              <IconCell $w={50} aria-label="Settings"><Settings size={24} strokeWidth={1.3} /></IconCell>
            </PdfTools>
            <Notice>
              <Info size={23} strokeWidth={1.2} />
              <NoticeText>
                This file has limited permissions. You may not have access to some features. <NoticeLink href="#permissions">View permissions</NoticeLink>
              </NoticeText>
              <IconCell $w={50} $h={40} aria-label="Dismiss"><X size={26} strokeWidth={1.2} /></IconCell>
            </Notice>
            <Page>
              <Watermark $x={482} $y={518}>p</Watermark>
              <Watermark $x={564} $y={440}>//</Watermark>
              <PageHeading>Retele de calculatoare – Info 3 (2022-2023)</PageHeading>
              <ResultsFigure />
              <Columns>
                <LeftColumn>
                  <MenuShot>
                    <MiniTitle $h={14} $blue>t: top]</MiniTitle>
                    <MiniMenu $pad={0} $gap={7}>
                      <MenuTop>fic</MenuTop><MenuTop $on>Protocols</MenuTop><MenuTop>DES</MenuTop><MenuTop>Windows</MenuTop><MenuTop>Help</MenuTop>
                    </MiniMenu>
                    <ShotToolbar />
                    <ShotMap><MenuShotMap /></ShotMap>
                    <PopupMenu x={14} y={28} w={86} indent={13} items={protocolItems} active="IP" />
                    <PopupMenu x={96} y={41} w={117} indent={13} items={ipItems} active="Routing" />
                    <PopupMenu x={209} y={55} w={236} indent={13} items={routingItems} active="Export Routing Tables..." />
                  </MenuShot>
                </LeftColumn>
                <RightColumn>
                  <DialogShot>
                    <DialogShotMap />
                    <ExportDialog>
                      <MiniTitle $h={21} $blue $font={11}><RiverLogo size={16} />Export Routing Tables</MiniTitle>
                      <RadioRow>
                        <RadioLabel><Radio type="radio" name="nodes" /><span><u>A</u>ll nodes</span></RadioLabel>
                        <RadioLabel><Radio type="radio" name="nodes" defaultChecked />Selected nodes</RadioLabel>
                      </RadioRow>
                      <OkButton><u>O</u>K</OkButton>
                    </ExportDialog>
                  </DialogShot>
                </RightColumn>
              </Columns>
            </Page>
          </PdfMain>
          <VBar><svg width="9" height="6"><path d="M0 6l4.5-5L9 6z" fill="#505050" /></svg></VBar>
          <HBar>
            <svg width="6" height="9"><path d="M6 0L0 4.5 6 9z" fill="#404040" /></svg>
            <HThumb />
            <svg width="13" height="9"><path d="M0 0l5 4.5L0 9z" fill="#404040" /></svg>
          </HBar>
          <BarCorner />
        </PdfPane>
        <SideBar>
          <IconCell $w={57} $h={53} aria-label="Search sidebar">
            <svg width="21" height="20"><path d="M13 13l6 6" stroke="#9b4de0" strokeWidth="4" /><circle cx="8" cy="8" r="6" fill="#f7f7f7" stroke="#1b62c4" strokeWidth="3.5" /></svg>
          </IconCell>
          <IconCell $w={57} $h={53} aria-label="Discover">
            <svg width="22" height="22"><path d="M10 0q1.500 8 9 9-7.500 1.500-9 10Q8.500 10.500 0 9.500 8.500 8 10 0z" fill="#8a2be2" /><path d="M17 13q.5 4 4.500 4.500-4 .5-4.500 4.500-.5-4-4.500-4.500 4-.5 4.500-4.500z" fill="#eeb211" /></svg>
          </IconCell>
          <IconCell $w={57} $h={53} aria-label="Shopping">
            <svg width="21" height="21"><path d="M10 1h8q2 0 2 2v7L10 20q-1 1-2 0L1 12q-1-1 0-2z" fill="#0f5fbf" /><circle cx="15" cy="5.5" r="2.5" fill="#ffd84a" /></svg>
          </IconCell>
          <IconCell $w={57} $h={53} aria-label="Tools">
            <svg width="22" height="20"><path d="M7 5V2h8v3" fill="none" stroke="#eeb211" strokeWidth="2" /><rect y="4" width="22" height="15" rx="2" fill="#1563b8" /></svg>
          </IconCell>
        </SideBar>
      </Below>
    </Browser>
  );
}

/* ------------------------------------------------------------------ */
/* Project window                                                      */
/* ------------------------------------------------------------------ */

const ToolRow = styled.div`
  display: flex;
  align-items: center;
  flex: none;
  height: 38px;
  margin-top: 4px;
  padding-left: 4px;
  border-top: 1px solid #a8a8a8;
  border-bottom: 1px solid #9a9a9a;
`;

const ToolSep = styled.span`
  width: 1px;
  height: 30px;
  margin: 0 1px;
  background: #a8a8a8;
`;

const ToolButton = styled.button`
  display: grid;
  place-items: center;
  flex: none;
  width: 30px;
  height: 30px;
`;

const Canvas = styled.div`
  display: grid;
  grid-template: minmax(0, 1fr) 22px / minmax(0, 1fr) 22px;
  flex: 1;
  min-height: 0;
  margin: 3px 7px 0 6px;
  padding-left: 6px;
  border: solid;
  border-width: 3px 0 0 2px;
  border-color: #7c7c7c;
`;

const MapClip = styled.div`
  overflow: hidden;
`;

const CornerButton = styled.button`
  ${raised}
  display: grid;
  place-items: center;
  margin: -5px 0 0 -4px;
`;

const StatusBar = styled.footer`
  display: flex;
  align-items: center;
  flex: none;
  gap: 2px;
  height: 31px;
  padding: 2px 3px 0 6px;
  font-size: ${UI_SIZE}px;
`;

const StatusField = styled.span<{ $w?: number }>`
  ${(p) => (p.$w ? `width: ${p.$w}px;` : "flex: 1;")}
  height: 20px;
  padding-left: 2px;
  line-height: 18px;
  border: 1px solid;
  border-color: #a0a0a0 #fff #fff #a0a0a0;
`;

const ToolSvg = ({ children }: { children: React.ReactNode }) => <svg width="20" height="20" viewBox="0 0 20 20" fill="none">{children}</svg>;

const tools: [string, React.ReactNode][] = [
  ["New", <><path d="M7 1h8l4 4v14H7z" fill="#fff" stroke="#111" strokeWidth="1.5" /><path d="M14 1v5h5" stroke="#111" /><rect y="7" width="8" height="8" fill="#5876b8" /><path d="M4 8.5v5M1.5 11h5" stroke="#fff" strokeWidth="1.4" /></>],
  ["Open", <><path d="M1 18V5h6l2 2h6v3" fill="#e8c65a" stroke="#6b5410" /><path d="M1 18l4-8h14l-4 8z" fill="#f2d778" stroke="#6b5410" /><path d="M11 3q4-3 7 1m0-3v4h-4" stroke="#111" /></>],
  ["Save", <><path d="M1 2h17v17H3l-2-2z" fill="#a89a12" stroke="#222" /><rect x="4" y="2" width="11" height="8" fill="#fff" /><rect x="5" y="13" width="9" height="6" fill="#222" /><rect x="6" y="14" width="3" height="4" fill="#eee" /></>],
  ["Print", <><path d="M6 1h11l-2 7H4z" fill="#fff" stroke="#222" /><path d="M1 9l3-2h15v8l-3 3H1z" fill="#8f9494" stroke="#222" /><path d="M2 13h14" stroke="#333" strokeWidth="1.5" /></>],
  ["|", null],
  ["Topology", <><path d="M4 3l12 13M16 2v13" stroke="#8a2030" strokeWidth="2" /><g><rect x="0" y="1" width="4" height="3" fill="#f58a1f" /><rect x="6" y="0" width="3" height="3" fill="#f0a030" /><rect x="11" y="0" width="6" height="5" fill="#8a2030" /><rect x="0" y="7" width="3" height="3" fill="#f2d21f" /><rect x="1" y="12" width="3" height="3" fill="#2fc22f" /><rect x="3" y="16" width="3" height="3" fill="#2fa0e8" /><rect x="8" y="16" width="3" height="3" fill="#2040c0" /><circle cx="17" cy="17" r="2.5" fill="#701828" /></g></>],
  ["|", null],
  ["Fail", <><rect width="20" height="20" fill="#8f8f8f" /><rect x="6" y="1" width="8" height="18" stroke="#222" fill="#c9c9c9" /><path d="M0 8h20" stroke="#3a62a8" /><path d="M4 5l12 12M16 5L4 17" stroke="#e01010" strokeWidth="3" /></>],
  ["Recover", <><rect width="20" height="20" fill="#8f8f8f" /><rect x="6" y="1" width="8" height="18" stroke="#222" fill="#c9c9c9" /><path d="M0 8h20" stroke="#3a62a8" /><path d="M5 10l4 5 9-9" stroke="#22b01c" strokeWidth="3.5" /></>],
  ["|", null],
  ["Parent", <><path d="M10 0l6 3 2 6-4 5v4l-4 2-4-2v-4L2 9l2-6z" fill="#9a9a9a" /><path d="M10 14V5M7 8l3-3 3 3" stroke="#f4f4f4" strokeWidth="2" /><circle cx="10" cy="16" r="1.5" fill="#eee" /></>],
  ["|", null],
  ["Zoom in", <><circle cx="12" cy="8" r="7" fill="#e8e8e8" stroke="#333" strokeWidth="1.8" /><path d="M12 5v6M9 8h6" stroke="#111" strokeWidth="1.5" /><path d="M7 13l-6 6" stroke="#111" strokeWidth="3" /></>],
  ["Zoom out", <><circle cx="12" cy="8" r="7" fill="#b4b4b4" stroke="#444" strokeWidth="1.8" /><path d="M9 8h6" stroke="#111" strokeWidth="1.5" /><path d="M7 13l-6 6" stroke="#111" strokeWidth="3" /></>],
  ["|", null],
  ["ACE", <><rect width="20" height="12" fill="#16808f" /><text x="1" y="10" fontFamily="Liberation Sans" fontWeight="700" fontSize="9" fill="#fff">ACE</text><path d="M4 14h12l-6 6z" fill="#111" /></>],
  ["|", null],
  ["Simulate", <><rect x="4" width="12" height="20" fill="#3c3c3c" /><circle cx="10" cy="4" r="2.5" fill="#e02020" /><circle cx="10" cy="10" r="2.5" fill="#e8a020" /><circle cx="10" cy="16" r="2.5" fill="#20c040" /></>],
  ["|", null],
  ["Run", <><path d="M1 18l5-4 4-4M8 12l5 3v3M10 5l6 4M3 7l4-3 6-1" stroke="#555" strokeWidth="1.5" /><path d="M6 9l4-6 6 3-5 6z" fill="#c01f40" /><path d="M12 4l4-3 3 1-2 4z" fill="#333" /><path d="M5 10l-3 4" stroke="#222" strokeWidth="3" /></>],
  ["|", null],
  ["Reports", <><rect x="1" y="1" width="15" height="14" fill="#ccc" stroke="#111" strokeWidth="1.5" /><rect x="4" y="5" width="15" height="14" fill="#d6d6d6" stroke="#111" strokeWidth="1.5" /><path d="M5 12l5-2 8-3" stroke="#2a9c4c" strokeWidth="1.5" /><path d="M5 16l5-3 8-1" stroke="#d02040" strokeWidth="1.5" /></>],
  ["Graphs", <><rect x="1" y="1" width="18" height="18" fill="#b9c2be" stroke="#111" strokeWidth="1.5" /><path d="M2 17L17 2" stroke="#fff" strokeWidth="1.5" /><path d="M12 10l3-3 3-1" stroke="#2a9c4c" strokeWidth="2" /><path d="M6 15l5-4 7 4" stroke="#d02040" strokeWidth="2" /><path d="M3 18l8-2 7 1" stroke="#1b62c4" strokeWidth="2" /></>],
];

const projectMenus = ["File", "Edit", "View", "Scenarios", "Topology", "Traffic", "Protocols", "DES", "Windows", "Help"];

const TrackThumb = styled(Thumb)`
  flex: 1;
  margin-top: 48px;
`;

function ProjectWindow() {
  return (
    <WindowFrame $x={948} $y={160} $w={951} $h={815} aria-label="Project">
      <TitleBar><RiverLogo /><TitleText>{"Project: IP Scenario: icmp_route_print  [Subnet: top]"}</TitleText><WindowControls /></TitleBar>
      <MenuBar>{projectMenus.map((m) => <MenuButton key={m}>{m}</MenuButton>)}</MenuBar>
      <ToolRow>
        <ToolSep />
        {tools.map(([name, art], i) => name === "|" ? <ToolSep key={i} /> : <ToolButton key={i} aria-label={name}><ToolSvg>{art}</ToolSvg></ToolButton>)}
      </ToolRow>
      <Canvas>
        <MapClip><ProjectMap /></MapClip>
        <ScrollTrack $w={22} $end={7}>
          <ScrollArrow dir="up" />
          <TrackThumb />
          <ScrollArrow dir="down" />
        </ScrollTrack>
        <ScrollTrack $row $w={22} $end={7}>
          <Thumb $row $len={719} />
          <Spacer />
          <ScrollArrow dir="right" />
        </ScrollTrack>
        <CornerButton aria-label="Overview">
          <svg width="17" height="17"><rect x="1" y="1" width="15" height="15" fill={LAND} stroke="#111" strokeWidth="2" /><rect x="7" y="7" width="8" height="8" fill="#1a2340" /><path d="M9 13V9h4M9 9l4 4" stroke="#fff" fill="none" /></svg>
        </CornerButton>
      </Canvas>
      <StatusBar>
        <StatusField />
        <StatusField $w={130}>-114.49, 34.09</StatusField>
        <ScrollBox $s={21} aria-label="Message log">
          <svg width="14" height="15" fill="none" stroke="#111"><path d="M1.5 1.5h8v10M3.5 1.5v10q0 2.5 2.5 2.5h6q1.5-2.5-1-3H7" /><path d="M5 4.5h3M5 6.5h3M5 8.5h3" /></svg>
        </ScrollBox>
      </StatusBar>
    </WindowFrame>
  );
}

/* ------------------------------------------------------------------ */
/* Results browser window                                              */
/* ------------------------------------------------------------------ */

const ResultsInner = styled.div`
  display: flex;
  flex-direction: column;
  flex: 1;
  min-height: 0;
  margin: 0 7px 6px 6px;
  border: solid;
  border-width: 0 3px 2px 1px;
  border-color: #fff #3c3c3c #4a4a4a #fff;
`;

const Panels = styled.div`
  display: flex;
  flex: 1;
  min-height: 0;
  margin: 5px 7px 0 6px;
  border: 1px solid #9c9c9c;
`;

const TreePanel = styled.div`
  display: flex;
  flex-direction: column;
  flex: none;
  width: 289px;
  padding: 2px 4px 0 2px;
  border-right: 2px solid #a8a8a8;
`;

const TreeBox = styled.div`
  display: grid;
  grid-template: minmax(0, 1fr) 22px / minmax(0, 1fr) 22px;
  flex: 1;
  min-height: 0;
  border: solid;
  border-width: 2px 1px 1px 2px;
  border-color: #777 #fff #fff #777;
`;

const IgnoreLabel = styled.label`
  display: flex;
  align-items: center;
  flex: none;
  gap: 6px;
  height: 31px;
  padding-left: 5px;
  font-size: ${UI_SIZE}px;
`;

const CheckBox = styled.input`
  appearance: none;
  width: 14px;
  height: 14px;
  border: 2px solid;
  border-color: #808080 #fff #fff #808080;
  background: #fff;
`;

const PreviewPanel = styled.div`
  display: flex;
  flex: 1;
  min-width: 0;
  padding: 6px 8px 8px 7px;
`;

const PreviewGroup = styled.fieldset`
  display: flex;
  flex: 1;
  min-width: 0;
  margin: 0;
  padding: 9px 7px 15px 8px;
  border: 1px solid #a0a0a0;
`;

const PreviewLegend = styled.legend`
  margin-left: 2px;
  padding: 0 5px;
  font-size: ${UI_SIZE}px;
  line-height: 20px;
`;

const SheetBox = styled.div`
  display: grid;
  grid-template: minmax(0, 1fr) 21px / minmax(0, 1fr) 21px;
  flex: 1;
  min-width: 0;
  border: solid #777;
  border-width: 2px 0 0 2px;
`;

const Sheet = styled.div<{ $gutter: number }>`
  overflow: hidden;
  background: linear-gradient(90deg, #f0f0f0 ${(p) => p.$gutter}px, #fff ${(p) => p.$gutter}px);
`;

const ResultsFooter = styled.footer`
  display: flex;
  align-items: center;
  flex: none;
  gap: 7px;
  height: 42px;
  padding: 0 5px 0 6px;
  font-size: ${UI_SIZE}px;
  white-space: nowrap;
`;

const ReportButton = styled(BevelButton)<{ $w: number }>`
  width: ${(p) => p.$w}px;
`;

function ResultsWindow() {
  return (
    <WindowFrame $x={630} $y={284} $w={963} $h={724} aria-label="Results Browser">
      <TitleBar><RiverLogo /><TitleText>Results Browser</TitleText></TitleBar>
      <ResultsInner>
        <ReportTabs widths={[82, 150, 132, 133]} />
        <Panels>
          <TreePanel>
            <TreeBox>
              <ObjectTree t={bigTree} />
              <ScrollTrack $w={22}><ScrollArrow dir="up" off /><Spacer /><ScrollArrow dir="down" off /></ScrollTrack>
              <ScrollTrack $row $w={22}><ScrollArrow dir="left" /><Thumb $row $len={114} /><Spacer /><ScrollArrow dir="right" /></ScrollTrack>
            </TreeBox>
            <IgnoreLabel><CheckBox type="checkbox" /><span><u>I</u>gnore views</span></IgnoreLabel>
          </TreePanel>
          <PreviewPanel>
            <PreviewGroup>
              <PreviewLegend>Preview</PreviewLegend>
              <SheetBox>
                <Sheet $gutter={28}>
                  <ReportTable corner endNums selected head={25} widths={[28, 138, 95, 133, 100]} heads={["IP Address", "Hop Delay", "Node Name", "MPLS Label"]} />
                </Sheet>
                <ScrollTrack><Spacer /><ScrollArrow dir="down" off /></ScrollTrack>
                <ScrollTrack $row><ScrollArrow dir="left" off /><Spacer /><ScrollArrow dir="right" off /></ScrollTrack>
              </SheetBox>
            </PreviewGroup>
          </PreviewPanel>
        </Panels>
        <ResultsFooter>
          <span>Results Generated: 21:36:07 Nov 08 2022</span>
          <Spacer />
          <ReportButton $w={154}><u>G</u>enerate Web Report...</ReportButton>
          <ReportButton $w={161}>Add to Report Showcase</ReportButton>
          <ReportButton $w={93}>S<u>h</u>ow</ReportButton>
        </ResultsFooter>
      </ResultsInner>
    </WindowFrame>
  );
}

/* ------------------------------------------------------------------ */
/* Ping report window                                                  */
/* ------------------------------------------------------------------ */

const PingBody = styled.div`
  display: flex;
  flex: 1;
  min-height: 0;
  padding: 8px 7px 7px;
`;

const PingSheet = styled(Sheet)`
  flex: 1;
`;

function PingWindow() {
  return (
    <WindowFrame $x={1323} $y={266} $w={546} $h={439} aria-label="Ping report">
      <TitleBar><RiverLogo /><TitleText>Performance.Ping Report for CA_FIREWALL at 10...</TitleText><WindowControls /></TitleBar>
      <MenuBar>{["File", "Edit", "View", "Help"].map((m) => <MenuButton key={m}>{m}</MenuButton>)}</MenuBar>
      <PingBody>
        <PingSheet $gutter={25}>
          <ReportTable red head={40} widths={[25, 137, 95, 133, 48, 72]} heads={["IP Address", "Hop Delay", "Node Name", "MPLS\nLabel", "MPLS\nEXP"]} />
        </PingSheet>
        <ScrollTrack><ScrollArrow dir="up" off /><Spacer /><ScrollArrow dir="down" off /></ScrollTrack>
      </PingBody>
    </WindowFrame>
  );
}

/* Windows showing behind the others */

const BackWindow = styled(WindowFrame)`
  padding: 7px 0 0 9px;
  background: linear-gradient(#fdfdfd, #e9e9e9 11px);
`;

const BackPage = styled(WindowFrame)`
  border: 0;
  background: #fff;
  padding-top: 66px;
`;

const BackLines = styled.div`
  height: 45px;
  border-bottom: 1px solid #d0d0d0;
  &::before { content: ""; display: block; height: 7px; border: solid #d0d0d0; border-width: 1px 0; }
`;

const TopEdge = styled.div`
  position: absolute;
  left: 809px;
  top: 0;
  width: 301px;
  height: 1px;
  border-left: 60px solid #0078d7;
  background: #e4e4e4;
`;

export default function App() {
  return (
    <>
      <GlobalStyle />
      <Desktop>
        <BackPage $x={1700} $y={230} $w={218} $h={741}><BackLines /></BackPage>
        <BackWindow $x={1179} $y={148} $w={707} $h={40}><RiverLogo /></BackWindow>
        <BrowserWindow />
        <TopEdge />
        <ProjectWindow />
        <ResultsWindow />
        <PingWindow />
      </Desktop>
    </>
  );
}
